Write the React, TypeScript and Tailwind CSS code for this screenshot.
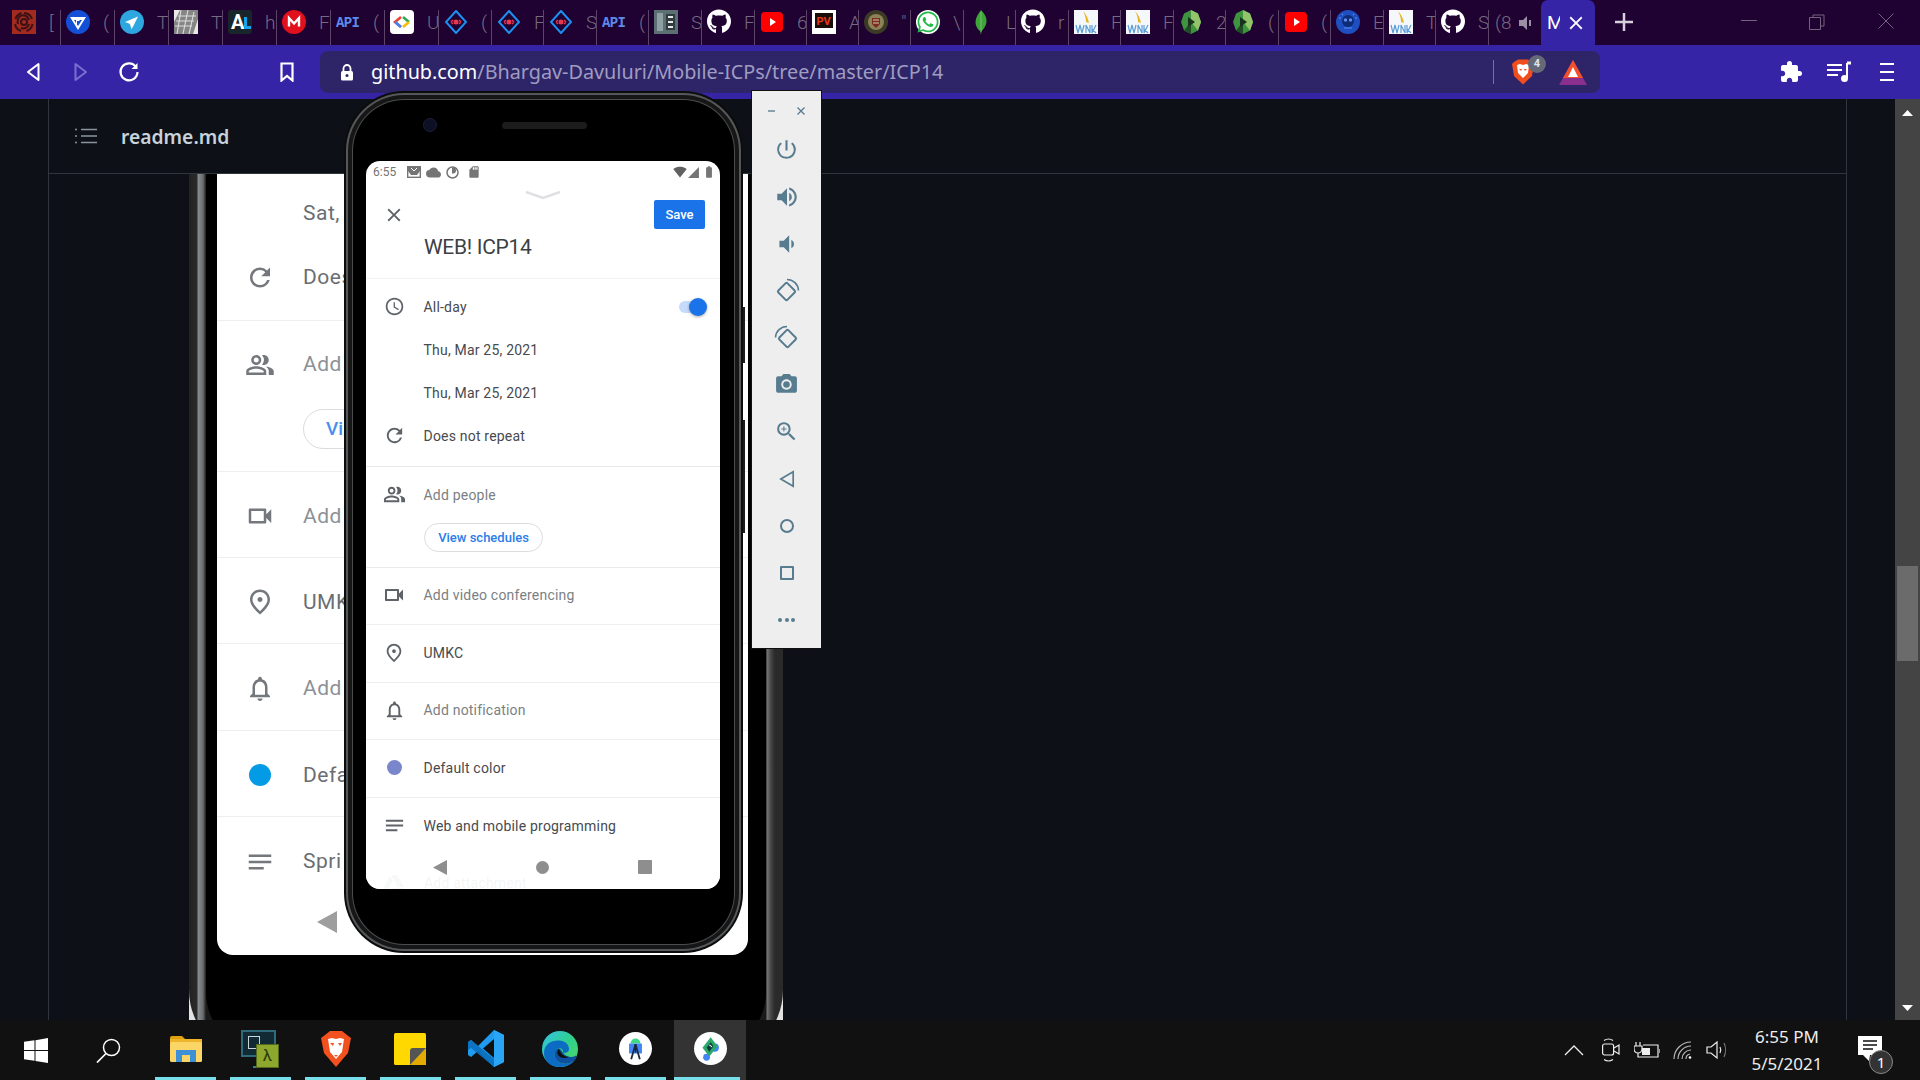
import React from "react";
import {
  MdPowerSettingsNew, MdVolumeUp, MdVolumeDown, MdPhotoCamera, MdZoomIn, MdClose, MdAccessTime, MdRefresh,
  MdOutlinePeopleAlt, MdOutlineVideocam, MdOutlinePlace, MdNotificationsNone, MdNotes, MdSignalWifi4Bar,
  MdSignalCellular4Bar, MdBatteryFull, MdCloud, MdSdCard, MdExtension,
} from "react-icons/md";
import { FaGithub, FaWhatsapp } from "react-icons/fa";

const Ic = ({ children, w = 24, h = 24, vb = "0 0 24 24", className = "" }: { children: React.ReactNode; w?: number; h?: number; vb?: string; className?: string }) => (
  <svg width={w} height={h} viewBox={vb} className={"shrink-0 " + className}>{children}</svg>
);

const Solo = () => (
  <Ic>
    <rect width="24" height="24" fill="#a32a1f" />
    <g fill="none" stroke="#3a1216" strokeWidth="2">
      <circle cx="12" cy="12" r="3" />
      <path d="M12 3a9 9 0 0 1 8 6M20.500 14a9 9 0 0 1-6 7M9 21a9 9 0 0 1-6-7M3.500 9a9 9 0 0 1 6-6" />
      <path d="M8 6c4-2 8 0 9 4M17 14c-1 4-5 5-8 4M6 14c-1-3 0-6 2-8" />
    </g>
  </Ic>
);
const Shield = () => (
  <Ic>
    <circle cx="12" cy="12" r="12" fill="#1450d6" />
    <path d="M4 7h16l-8 13zM8 10l4 6 4-6z" fill="#fff" fillRule="evenodd" />
    <path d="M10 9h5l-2 2h-2v4l-1-1z" fill="#fff" />
  </Ic>
);
const Telegram = () => (
  <Ic>
    <circle cx="12" cy="12" r="12" fill="#2ea6df" />
    <path d="M18 6.500 5 12l4 1.500 1 .8 1.500 5 2-3.500L18 6.500z" fill="#fff" />
  </Ic>
);
const Sheet = () => (
  <Ic>
    <rect width="24" height="24" fill="#e8e8e8" />
    <path d="M6 0h18v9l-5 15H0V12z" fill="#858585" />
    <path d="M4 6h18M2 11h18M1 16h17M7 0 3 24M14 0 9 24M20 2l-5 22" stroke="#ddd" strokeWidth="1.100" />
  </Ic>
);
const AL = () => (
  <Ic>
    <rect width="24" height="24" rx="3" fill="#18262c" />
    <text x="3" y="19" fontSize="20" fontWeight="700" fill="#fff" fontFamily="Roboto">A</text>
    <rect x="16" y="7" width="3" height="12" fill="#13a3f0" />
    <rect x="16" y="16" width="7" height="3" fill="#13a3f0" />
  </Ic>
);
const Mega = () => (
  <Ic>
    <circle cx="12" cy="12" r="12" fill="#e0101c" />
    <path d="M7 16.500V8l5 5.500L17 8v8.500" fill="none" stroke="#fff" strokeWidth="2.400" />
  </Ic>
);
const Api = () => (
  <Ic>
    <text x="0" y="17" fontSize="14" fontWeight="700" fill="#5b8be8" fontFamily="Liberation Mono" textLength="24">API</text>
  </Ic>
);
const GDev = () => (
  <Ic>
    <rect width="24" height="24" rx="4" fill="#fff" />
    <path d="M11 7 5 12l6 5" fill="none" stroke="#ea4335" strokeWidth="2.600" />
    <path d="M5 12l6 5" fill="none" stroke="#4285f4" strokeWidth="2.600" />
    <path d="M13 7l6 5" fill="none" stroke="#34a853" strokeWidth="2.600" />
    <path d="M19 12l-6 5" fill="none" stroke="#fbbc05" strokeWidth="2.600" />
  </Ic>
);
const Dia = () => (
  <Ic>
    <path d="M12 1 22 12 12 23 2 12z" fill="none" stroke="#1e90f0" strokeWidth="2" />
    <circle cx="12" cy="12" r="2.500" fill="#e8384f" />
    <path d="M7 12l2-2M7 12l2 2M17 12l-2-2M17 12l-2 2" stroke="#e8384f" strokeWidth="1.500" />
  </Ic>
);
const Server = () => (
  <Ic>
    <rect width="24" height="24" fill="#5c7074" />
    <rect x="3" y="3" width="6" height="18" fill="#8fa0a2" />
    <rect x="12" y="4" width="9" height="16" fill="#2f3d41" />
    <path d="M14 7h5M14 12h5M14 17h5" stroke="#e8e8e8" strokeWidth="2.200" />
  </Ic>
);
const Git = () => (
  <span className="w-[24px] h-[24px] flex items-center justify-center shrink-0">
    <FaGithub size={25} color="#fff" />
  </span>
);
const YT = () => (
  <Ic>
    <rect x="1" y="2" width="22" height="20" rx="4" fill="#f00" />
    <path d="M10 8l6 4-6 4z" fill="#fff" />
  </Ic>
);
const PV = () => (
  <Ic>
    <rect width="24" height="24" fill="#fff" />
    <rect x="3" y="3" width="18" height="15" fill="#1b0d0a" />
    <text x="4.500" y="15" fontSize="11" fontWeight="700" fill="#e8391a" fontFamily="Roboto">PV</text>
  </Ic>
);
const Crest = () => (
  <Ic>
    <circle cx="12" cy="12" r="12" fill="#3b3a25" />
    <circle cx="12" cy="12" r="8" fill="#8d8157" />
    <path d="M8 8h8v6l-4 4-4-4z" fill="#7a2b22" />
    <path d="M9 10h6M9 13h6" stroke="#d8cfa8" strokeWidth="1.200" />
  </Ic>
);
const WA = () => (
  <span className="w-[24px] h-[24px] rounded-full bg-white flex items-center justify-center shrink-0">
    <FaWhatsapp size={24} color="#25b94c" />
  </span>
);
const Leaf = () => (
  <Ic>
    <path d="M12 0c4 4 6 8 5.500 12S14 20 12.500 21l-.3 3h-.6l-.2-3C9 20 6.500 16 6.500 12S9 4 12 0z" fill="#3ea53a" />
    <path d="M12 2v20" stroke="#8ed287" strokeWidth=".7" />
  </Ic>
);
const UMKC = () => (
  <Ic>
    <rect width="24" height="30" fill="#f5f8fb" />
    <path d="M9 1c3 3 5 7 6 12l-3-1C12 8 11 5 9 1z" fill="#e6b422" />
    <path d="M2 15l2 8 2-8 2 8 2-8M12 23v-8l4 8v-8M18 15v8l4-8M18 19l4 4" fill="none" stroke="#5d9ed8" strokeWidth="1.200" />
  </Ic>
);
const Hex = () => (
  <Ic>
    <path d="M12 0 19 3.500 22 12l-3 8.500L12 24l-7-3.500L2 12l3-8.500z" fill="#3f9440" />
    <path d="M12 0 19 3.500 22 12l-3 8.500L12 12z" fill="#92c46a" />
    <path d="M12 12 5 20.500 12 24z" fill="#1f4d25" />
    <path d="M9 7l7 5-7 5z" fill="#17331c" />
  </Ic>
);
const Skull = () => (
  <Ic>
    <circle cx="12" cy="12" r="12" fill="#1d4fc0" />
    <circle cx="12" cy="11" r="6" fill="#0e2c76" />
    <circle cx="9.500" cy="10" r="1.700" fill="#5e8cf0" />
    <circle cx="14.500" cy="10" r="1.700" fill="#5e8cf0" />
    <path d="M8 18h8M3 8h2M19 8h2M6 4l1 1M18 4l-1 1" stroke="#5e8cf0" strokeWidth="1.200" />
  </Ic>
);

type Tab = { w: number; i: React.ReactNode; l: string; pl?: number };
const tabs: Tab[] = [
  { w: 61, i: <Solo />, l: "[", pl: 12 },
  { w: 54, i: <Shield />, l: "(" },
  { w: 54, i: <Telegram />, l: "T" },
  { w: 54, i: <Sheet />, l: "T" },
  { w: 54, i: <AL />, l: "h" },
  { w: 54, i: <Mega />, l: "F" },
  { w: 54, i: <Api />, l: "(" },
  { w: 54, i: <GDev />, l: "U" },
  { w: 53, i: <Dia />, l: "(" },
  { w: 52, i: <Dia />, l: "F" },
  { w: 53, i: <Dia />, l: "S" },
  { w: 52, i: <Api />, l: "(" },
  { w: 53, i: <Server />, l: "S" },
  { w: 53, i: <Git />, l: "F" },
  { w: 52, i: <YT />, l: "6" },
  { w: 52, i: <PV />, l: "A" },
  { w: 52, i: <Crest />, l: '"' },
  { w: 53, i: <WA />, l: "\\" },
  { w: 52, i: <Leaf />, l: "L" },
  { w: 53, i: <Git />, l: "r" },
  { w: 52, i: <UMKC />, l: "F" },
  { w: 53, i: <UMKC />, l: "F" },
  { w: 52, i: <Hex />, l: "2" },
  { w: 53, i: <Hex />, l: "(" },
  { w: 52, i: <YT />, l: "(" },
  { w: 53, i: <Skull />, l: "E" },
  { w: 52, i: <UMKC />, l: "T" },
  { w: 53, i: <Git />, l: "S" },
];

function TabStrip() {
  return (
    <div className="h-[45px] bg-[#1f0132] flex shrink-0 font-[Roboto,sans-serif]">
      {tabs.map((t, k) => (
        <div key={k} className="h-full flex shrink-0" style={{ width: t.w }}>
          <div className="flex-1 flex items-center min-w-0 overflow-hidden" style={{ paddingLeft: t.pl ?? 5 }}>
            <div className="-mt-[2px] shrink-0">{t.i}</div>
            <span className="ml-[13px] text-[19px] font-light text-[#766a80] leading-none">{t.l}</span>
          </div>
          <div className="self-end h-[35px] w-[1px] bg-[#5b4668]" />
        </div>
      ))}
      <div className="w-[52px] h-full flex items-center shrink-0 pl-[6px]">
        <span className="text-[19px] font-light text-[#766a80] leading-none">(8</span>
        <svg width="16" height="16" viewBox="0 0 16 16" className="ml-[6px]">
          <path d="M1 5h4l4-4v14l-4-4H1z" fill="#9a8fa3" />
          <path d="M11 5v6h2V5z" fill="#9a8fa3" />
        </svg>
      </div>
      <div className="w-[54px] h-full bg-[#3624a6] rounded-t-[7px] flex items-center shrink-0 pl-[6px]">
        <span className="text-[19px] text-white leading-none w-[13px] overflow-hidden">M</span>
        <MdClose size={22} color="#fff" className="ml-[5px]" />
      </div>
      <svg width="18" height="18" viewBox="0 0 18 18" className="ml-[20px] mt-[13px] shrink-0">
        <path d="M9 0v18M0 9h18" stroke="#d7d0dc" strokeWidth="2.500" />
      </svg>
      <div className="ml-[108px] mt-[20px] w-[16px] h-[1px] bg-[#74637f] shrink-0" />
      <svg width="16" height="16" viewBox="0 0 16 16" className="ml-[52px] mt-[14px] shrink-0">
        <path d="M4 3V1h11v11h-3M.500 3.500h11v12H.500z" fill="none" stroke="#74637f" />
      </svg>
      <svg width="16" height="16" viewBox="0 0 16 16" className="ml-[53px] mt-[13px] shrink-0">
        <path d="M.500.500l15 15M15.500.500l-15 15" stroke="#74637f" />
      </svg>
    </div>
  );
}

function AddressBar() {
  return (
    <div className="h-[54px] bg-[#3624a6] flex items-center shrink-0">
      <svg width="14" height="20" viewBox="0 0 14 20" className="ml-[26px] shrink-0">
        <path d="M12.500 2v16L2 10z" fill="none" stroke="#fff" strokeWidth="2" strokeLinejoin="round" />
      </svg>
      <svg width="14" height="20" viewBox="0 0 14 20" className="ml-[34px] shrink-0">
        <path d="M1.500 2v16L12 10z" fill="none" stroke="#7a6ed0" strokeWidth="2" strokeLinejoin="round" />
      </svg>
      <svg width="22" height="22" viewBox="0 0 22 22" className="ml-[30px] shrink-0">
        <path d="M18 6A8.500 8.500 0 1 0 19.500 11" fill="none" stroke="#fff" strokeWidth="2.200" />
        <path d="M19.500 2v6h-6z" fill="#fff" />
      </svg>
      <svg width="14" height="20" viewBox="0 0 14 20" className="ml-[140px] shrink-0">
        <path d="M1.500 1.500h11v17L7 14l-5.500 4.500z" fill="none" stroke="#fff" strokeWidth="2.200" />
      </svg>
      <div className="ml-[26px] w-[1280px] h-[42px] rounded-[8px] bg-[#2d2568] flex items-center shrink-0">
        <svg width="14" height="17" viewBox="0 0 14 17" className="ml-[20px] shrink-0">
          <path d="M3.500 7V4.500a3.500 3.500 0 0 1 7 0V7" fill="none" stroke="#fff" strokeWidth="1.800" />
          <rect x="1" y="7" width="12" height="9.500" rx="1.500" fill="#fff" />
          <circle cx="7" cy="11.500" r="1.500" fill="#2d2568" />
        </svg>
        <div className="ml-[17px] text-[19.800px] leading-none font-[Noto_Sans,sans-serif] whitespace-nowrap w-[1123px] shrink-0">
          <span className="text-white">github.com</span>
          <span className="text-[#a09cc0]">/Bhargav-Davuluri/Mobile-ICPs/tree/master/ICP14</span>
        </div>
        <div className="w-[1px] h-[24px] bg-[#77719f] shrink-0 -ml-[1px]" />
        <div className="relative ml-[17px] w-[24px] h-[26px] shrink-0">
          <svg width="24" height="26" viewBox="0 0 24 26">
            <path d="M3 3l4-2.500h10L21 3l2 2-2 12-9 8.500L3 17 1 5z" fill="#f04e1e" />
            <path d="M6 6l3-1 3 1 3-1 3 1-1 8-5 5-5-5z" fill="#fff" />
            <path d="M8 10h3l-1 2zM13 10h3l-2 2z" fill="#f04e1e" />
          </svg>
          <span className="absolute left-[17px] -top-[4px] w-[18px] h-[18px] rounded-full bg-[#666a78] text-[11px] font-bold text-[#dfe6f0] flex items-center justify-center font-[Roboto,sans-serif]">4</span>
        </div>
        <svg width="28" height="25" viewBox="0 0 28 25" className="ml-[24px] shrink-0">
          <path d="M14 0 28 25H0z" fill="#8a2f8e" />
          <path d="M14 0 24 18H4z" fill="#f2502a" />
          <path d="M14 7l5 10H9z" fill="#fff" />
        </svg>
      </div>
      <MdExtension size={24} color="#fff" className="ml-[179px] shrink-0" />
      <svg width="24" height="24" viewBox="0 0 24 24" className="ml-[24px] shrink-0">
        <path d="M0 5h15M0 10h15M0 15h11" stroke="#fff" strokeWidth="2" />
        <path d="M20 3v15" stroke="#fff" strokeWidth="2" />
        <path d="M20 3h4" stroke="#fff" strokeWidth="3" />
        <circle cx="17.500" cy="18.500" r="3.500" fill="#fff" />
      </svg>
      <svg width="14" height="20" viewBox="0 0 14 20" className="ml-[29px] shrink-0">
        <path d="M0 2h14M0 10h14M0 18h14" stroke="#fff" strokeWidth="2" />
      </svg>
    </div>
  );
}

const BgRow = ({ icon, text, h, border = true, muted = false, nudge = true }: { icon: React.ReactNode; text: string; h: number; border?: boolean; muted?: boolean; nudge?: boolean }) => (
  <div className={"flex items-center pl-[28px] box-border " + (border ? "border-b border-[#eeeeee] " : "") + (nudge ? "pt-[3px]" : "")} style={{ height: h }}>
    <div className="w-[30px] flex justify-center">{icon}</div>
    <span className={"ml-[28px] text-[21px] tracking-[0.5px] leading-none " + (muted ? "text-[#8d9196]" : "text-[#6a6e72]")}>{text}</span>
  </div>
);

function BgPhone() {
  const c = "#74777b";
  return (
    <div className="ml-[140px] w-[594px] h-[886px] bg-[#e2e2e2] shrink-0">
      <div className="w-full h-full rounded-b-[70px] bg-[linear-gradient(90deg,#222_0px,#2a2a2a_8px,#8a8d8f_9px,#6a6d6f_14px,#1a1a1a_17px,#1a1a1a_577px,#777_578px,#444_582px,#2a2a2a_586px,#2a2a2a_594px)] px-[17px] pb-[6px]">
        <div className="w-full h-full bg-black rounded-b-[62px] pl-[11px]">
          <div className="w-[531px] h-[781px] bg-white rounded-b-[16px] font-[Roboto,sans-serif] flex flex-col overflow-hidden">
            <BgRow icon={null} text="Sat," h={78} border={false} nudge={false} />
            <div className="h-[69px] border-b border-[#eeeeee] box-border">
              <BgRow icon={<MdRefresh size={31} color={c} />} text="Does" h={48} border={false} />
            </div>
            <div className="h-[151px] border-b border-[#eeeeee] box-border">
              <BgRow icon={<MdOutlinePeopleAlt size={34} color={c} />} text="Add" h={84} border={false} muted />
              <div className="ml-[86px] mt-[4px] w-[120px] h-[40px] rounded-full border border-[#dadce0] pl-[22px] flex items-center text-[19px] font-medium text-[#4a8fec]">Vi</div>
            </div>
            <BgRow icon={<MdOutlineVideocam size={38} color={c} />} text="Add" h={86} muted />
            <BgRow icon={<MdOutlinePlace size={30} color={c} />} text="UMK" h={86} />
            <BgRow icon={<MdNotificationsNone size={31} color={c} />} text="Add" h={87} muted />
            <BgRow icon={<span className="w-[22px] h-[22px] rounded-full bg-[#039be5] block" />} text="Defa" h={86} />
            <BgRow icon={<MdNotes size={32} color={c} />} text="Spri" h={86} border={false} />
            <div className="pl-[100px] pt-[8px]">
              <svg width="20" height="22" viewBox="0 0 20 22"><path d="M20 0v22L0 11z" fill="#9e9e9e" /></svg>
            </div>
          </div>
        </div>
      </div>
    </div>
  );
}

const Row = ({ icon, text, muted, border = true, h = 57 }: { icon?: React.ReactNode; text: string; muted?: boolean; border?: boolean; h?: number }) => (
  <div className={"flex items-center pl-[16px] pb-[2px] box-border shrink-0 " + (border ? "border-b border-[#eceef0]" : "")} style={{ height: h }}>
    <div className="w-[24px] h-[24px] flex items-center justify-center shrink-0">{icon}</div>
    <span className={"ml-[17.500px] text-[14px] tracking-[0.2px] leading-none " + (muted ? "text-[#7a7f84]" : "text-[#474a4e]")}>{text}</span>
  </div>
);

function Screen() {
  const c = "#5f6368";
  return (
    <div className="w-[354px] h-[728px] bg-white rounded-[14px] overflow-hidden relative font-[Roboto,sans-serif]">
      <div className="h-[22px] flex items-center pl-[7px] pr-[7px] text-[#757575] text-[12px]">
        <span className="w-[34px] shrink-0">6:55</span>
        <svg width="14" height="12" viewBox="0 0 14 12" className="shrink-0">
          <rect x=".700" y=".700" width="12.600" height="10.600" fill="none" stroke="#757575" strokeWidth="1.400" />
          <path d="M1 1h12v4L10 9H4L1 5z" fill="#757575" />
          <path d="M4 2l3 3 3-3" fill="none" stroke="#fff" strokeWidth="1" />
        </svg>
        <MdCloud size={15} color="#757575" className="ml-[5px] shrink-0" />
        <svg width="13" height="13" viewBox="0 0 13 13" className="ml-[5px] shrink-0">
          <circle cx="6.500" cy="6.500" r="5.500" fill="none" stroke="#757575" strokeWidth="1.500" />
          <path d="M6 1.500h1a3 3 0 0 1 0 6H6z" fill="#757575" />
        </svg>
        <MdSdCard size={14} color="#757575" className="ml-[8px] shrink-0" />
        <span className="flex-1" />
        <MdSignalWifi4Bar size={14} color="#616161" />
        <MdSignalCellular4Bar size={13} color="#757575" />
        <MdBatteryFull size={14} color="#757575" className="ml-[2px] -mr-[3px]" />
      </div>
      <div className="h-[17px] flex justify-center pt-[7px]">
        <svg width="36" height="10" viewBox="0 0 36 10"><path d="M1 2l17 6 17-6" fill="none" stroke="#e0e0e4" strokeWidth="2.500" /></svg>
      </div>
      <div className="h-[29px] flex items-center justify-between pl-[17px] pr-[15px]">
        <MdClose size={22} color={c} />
        <button className="w-[51px] h-[29px] rounded-[2px] bg-[#1a73e8] text-white text-[13px] font-medium pt-[1px]">Save</button>
      </div>
      <div className="h-[50px] pl-[58px] border-b border-[#f1f3f4] box-border">
        <div className="text-[21px] leading-[36px] text-[#3c4043] tracking-[-0.3px]">WEB! ICP14</div>
      </div>
      <div className="pt-[7px] pb-[8px] border-b border-[#e8eaed]">
        <div className="relative">
          <Row icon={<MdAccessTime size={21} color={c} />} text="All-day" border={false} h={43} />
          <div className="absolute left-[313px] top-[15px] w-[26px] h-[12px] rounded-full bg-[#c6dafc]" />
          <div className="absolute left-[323px] top-[12px] w-[18px] h-[18px] rounded-full bg-[#1a73e8] shadow-[0_1px_3px_rgba(0,0,0,0.35)]" />
        </div>
        <Row text="Thu, Mar 25, 2021" border={false} h={43} />
        <Row text="Thu, Mar 25, 2021" border={false} h={43} />
        <Row icon={<MdRefresh size={23} color={c} />} text="Does not repeat" border={false} h={43} />
      </div>
      <div className="pt-[7px] pb-[15px] border-b border-[#e8eaed]">
        <Row icon={<MdOutlinePeopleAlt size={23} color={c} />} text="Add people" muted border={false} h={43} />
        <div className="ml-[58px] mt-[6px] w-[119px] h-[29px] rounded-full border border-[#dadce0] flex items-center justify-center text-[13px] font-medium text-[#2a7de9]">View schedules</div>
      </div>
      <Row icon={<MdOutlineVideocam size={26} color={c} />} text="Add video conferencing" muted h={57} />
      <Row icon={<MdOutlinePlace size={22} color={c} />} text="UMKC" h={58} />
      <Row icon={<MdNotificationsNone size={23} color={c} />} text="Add notification" muted h={57} />
      <Row icon={<span className="w-[15px] h-[15px] rounded-full bg-[#7986cb] block" />} text="Default color" h={58} />
      <Row icon={<MdNotes size={23} color={c} />} text="Web and mobile programming" border={false} h={57} />
      <div className="flex items-center pl-[18px] h-[57px]">
        <svg width="20" height="18" viewBox="0 0 20 18"><path d="M7 0h6l7 12h-6zM6 1 0 12l3 5 6-11zM5 17h12l3-4H8z" fill="#9aa0a6" /></svg>
        <span className="ml-[20px] text-[14px] tracking-[0.2px] text-[#70757a]">Add attachment</span>
      </div>
      <div className="absolute left-0 right-0 bottom-0 h-[44px] bg-white/92 flex items-center pl-[67px]">
        <svg width="14" height="15" viewBox="0 0 14 15"><path d="M14 0v15L0 7.500z" fill="#8e8e8e" /></svg>
        <span className="ml-[89px] w-[13px] h-[13px] rounded-full bg-[#8e8e8e]" />
        <span className="ml-[89px] w-[14px] h-[14px] rounded-[1px] bg-[#8e8e8e]" />
      </div>
    </div>
  );
}

function Phone() {
  return (
    <div className="absolute left-[344px] top-[91px] w-[399px] h-[862px]">
      <div className="absolute right-[-2px] top-[216px] w-[4px] h-[56px] bg-[#1c1c1c]" />
      <div className="absolute right-[-2px] top-[329px] w-[4px] h-[113px] bg-[#1c1c1c]" />
      <div className="relative w-full h-full rounded-[60px] bg-[#0c0c0c] p-[2px]">
        <div className="w-full h-full rounded-[58px] bg-[#55585a] p-[2px]">
          <div className="w-full h-full rounded-[56px] bg-[#161616] p-[4px]">
            <div className="w-full h-full rounded-[52px] bg-[#4a4c4e] p-[1px]">
              <div className="w-full h-full rounded-[51px] bg-black pl-[13px] pt-[61px]">
                <div className="flex items-center h-[8px] -mt-[40px] mb-[32px]">
                  <span className="ml-[57px] w-[14px] h-[14px] rounded-full bg-[#0d0f24] border border-[#1c1f3a] shrink-0" />
                  <span className="ml-[65px] w-[85px] h-[7px] rounded-full bg-[#1c1c1c] shrink-0" />
                </div>
                <Screen />
              </div>
            </div>
          </div>
        </div>
      </div>
    </div>
  );
}

function Rot({ flip }: { flip?: boolean }) {
  return (
    <svg width="26" height="26" viewBox="0 0 26 26" style={flip ? { transform: "scaleX(-1)" } : undefined}>
      <g fill="none" stroke="#587c8f" strokeWidth="2">
        <rect x="6" y="7" width="13" height="13" rx="1.500" transform="rotate(45 12.500 13.500)" />
        <path d="M13 1.500a11.500 11.500 0 0 1 11.500 11" strokeWidth="1.600" />
      </g>
    </svg>
  );
}

function Tools() {
  const c = "#587c8f";
  const items: React.ReactNode[] = [
    <MdPowerSettingsNew size={25} color={c} />,
    <MdVolumeUp size={26} color={c} />,
    <MdVolumeDown size={26} color={c} />,
    <Rot />,
    <Rot flip />,
    <MdPhotoCamera size={25} color={c} />,
    <MdZoomIn size={25} color={c} />,
    <svg width="16" height="18" viewBox="0 0 14 16"><path d="M12.500 1.500v13L1.500 8z" fill="none" stroke={c} strokeWidth="1.500" /></svg>,
    <span className="w-[14px] h-[14px] rounded-full border-2 border-[#587c8f]" />,
    <span className="w-[14px] h-[14px] rounded-[1px] border-2 border-[#587c8f]" />,
    <span className="flex gap-[2.500px]"><i className="w-[4px] h-[4px] rounded-full bg-[#587c8f]" /><i className="w-[4px] h-[4px] rounded-full bg-[#587c8f]" /><i className="w-[4px] h-[4px] rounded-full bg-[#587c8f]" /></span>,
  ];
  return (
    <div className="absolute left-[752px] top-[91px] w-[69px] h-[557px] bg-[#eeeeee] shadow-[0_0_0_1px_#111] flex flex-col">
      <div className="h-[35px] flex items-center pl-[16px] pt-[5px] shrink-0">
        <span className="w-[7px] h-[1.500px] bg-[#8aa0ad]" />
        <svg width="10" height="10" viewBox="0 0 10 10" className="ml-[21px]"><path d="M1.500 1.500l7 7M8.500 1.500l-7 7" stroke="#587c8f" strokeWidth="1.300" /></svg>
      </div>
      {items.map((it, k) => (
        <div key={k} className="h-[47px] flex items-center justify-center shrink-0">{it}</div>
      ))}
    </div>
  );
}

function Main() {
  return (
    <div className="flex-1 flex min-h-0 bg-[#0d1117]">
      <div className="w-[48px] shrink-0" />
      <div className="w-[1799px] shrink-0 border-x border-[#30363d] flex flex-col overflow-hidden box-border">
        <div className="h-[75px] shrink-0 border-b border-[#30363d] flex items-center box-border">
          <svg width="22" height="16" viewBox="0 0 22 16" className="ml-[26px]">
            <path d="M6 1.500h16M6 8h16M6 14.500h16" stroke="#8b949e" strokeWidth="1.700" />
            <circle cx="1" cy="1.500" r="1" fill="#8b949e" />
            <circle cx="1" cy="8" r="1" fill="#8b949e" />
            <circle cx="1" cy="14.500" r="1" fill="#8b949e" />
          </svg>
          <span className="ml-[24px] pt-[2px] text-[19.300px] font-semibold text-[#c9d1d9] font-[Noto_Sans,sans-serif] leading-none">readme.md</span>
        </div>
        <BgPhone />
      </div>
      <div className="w-[48px] shrink-0" />
      <div className="w-[25px] shrink-0 bg-[#444444] flex flex-col items-center">
        <svg width="11" height="6" viewBox="0 0 11 6" className="mt-[11px]"><path d="M5.500 0 11 6H0z" fill="#fff" /></svg>
        <div className="mt-[450px] w-[21px] h-[95px] bg-[#6b6b6b]" />
        <div className="flex-1" />
        <svg width="11" height="6" viewBox="0 0 11 6" className="mb-[9px]"><path d="M0 0h11L5.500 6z" fill="#fff" /></svg>
      </div>
    </div>
  );
}

const Folder = () => (
  <Ic w={32} h={26} vb="0 0 32 26">
    <path d="M0 2a2 2 0 0 1 2-2h10l3 3H0z" fill="#e0a10f" />
    <rect y="3" width="32" height="5" fill="#eeb52b" />
    <rect y="6" width="32" height="20" rx="1.500" fill="#fbd565" />
    <path d="M6 14h20v12h-6v-7h-8v7H6z" fill="#3d8fd6" />
  </Ic>
);
const Racket = () => (
  <span className="relative w-[38px] h-[38px] block -ml-[1px]">
    <span className="absolute left-0 top-0 w-[35px] h-[27px] border-2 border-[#2e6a7a] bg-[#122a33]" />
    <span className="absolute left-[7px] top-[6px] w-[12px] h-[13px] border border-[#c8d4d8]" />
    <span className="absolute left-[12px] bottom-0 w-[14px] h-[2px] bg-[#3d7d8f]" />
    <span className="absolute left-[15px] top-[14px] w-[23px] h-[24px] bg-[#8ea82e] border border-[#56691a] flex items-center justify-center text-[#2e3a0c] text-[17px] leading-none font-[Roboto,sans-serif]">λ</span>
  </span>
);
const BraveBig = () => (
  <Ic w={30} h={36} vb="0 0 30 36">
    <path d="M4 4 9 0h12l5 4 4 3-3 15-12 14L3 22 0 7z" fill="#f2501e" />
    <path d="M7 8l4-1 4 1 4-1 4 1-2 13-6 7-6-7z" fill="#fff" />
    <path d="M9 12h4l-1 3zM17 12h4l-2 3z" fill="#f2501e" />
    <path d="M13 24h4l-2 2z" fill="#f2501e" />
  </Ic>
);
const Sticky = () => (
  <Ic w={32} h={32} vb="0 0 32 32" className="-ml-[2px]">
    <rect width="32" height="32" rx="1.500" fill="#ffd800" />
    <path d="M32 15v17H16z" fill="#e3ab00" />
    <path d="M16 32 32 15H19a3 3 0 0 0-3 3z" fill="#555" />
  </Ic>
);
const VS = () => (
  <Ic w={36} h={37} vb="0 0 36 37">
    <path d="M26 0 36 5v27l-10 5L10 21l-7 6-3-2V12l3-2 7 6z" fill="#1f9cf0" />
    <path d="M26 9 15 18.500 26 28z" fill="#111" />
    <path d="M0 12l3-2 23 19v8L3 18 0 20z" fill="#0a6ebd" opacity=".9" />
    <path d="M26 0v37l10-5V5z" fill="#2aa5f5" />
  </Ic>
);
const Edge = () => (
  <Ic w={36} h={36} vb="0 0 36 36" className="-ml-[1px]">
    <defs>
      <linearGradient id="eg" x1="0" y1="0" x2="1" y2="1"><stop offset="0" stopColor="#35c1f1" /><stop offset=".5" stopColor="#2fd08a" /><stop offset="1" stopColor="#52d66a" /></linearGradient>
    </defs>
    <circle cx="18" cy="18" r="18" fill="url(#eg)" />
    <path d="M2 22C2 12 12 8 20 10c5 1 7 5 7 8 0 3-3 4-6 4 1-4-3-6-6-4-4 3-3 10 2 13 4 2 10 3 16-2-3 4-8 7-15 7C8 36 2 30 2 22z" fill="#0c6cc4" />
    <path d="M15 18c-4 3-3 10 2 13 4 2 10 3 16-2 2-2 2-5 0-4-3 2-9 1-12-3-1-2-3-6-6-4z" fill="#0f4f9f" />
    <path d="M17 18c-2 1-2 4-1 6 2 3 7 4 11 2-5 0-8-3-10-8z" fill="#101010" />
  </Ic>
);
const AS = () => (
  <span className="w-[33px] h-[33px] rounded-full bg-white flex items-center justify-center">
    <svg width="17" height="23" viewBox="0 0 22 32">
      <path d="M4 9a7 7 0 0 1 14 0z" fill="#3ddc84" />
      <rect x="2" y="9" width="18" height="14" rx="1" fill="#4285f4" />
      <path d="M11 10 5 31M11 10l6 21" stroke="#1a2a3a" strokeWidth="2.500" />
      <path d="M11 10v12" stroke="#1a2a3a" strokeWidth="2" />
    </svg>
  </span>
);
const Emu = () => (
  <span className="w-[33px] h-[33px] rounded-full bg-white flex items-center justify-center">
    <svg width="20" height="26" viewBox="0 0 28 38">
      <circle cx="21" cy="17" r="6" fill="#4285f4" />
      <circle cx="9" cy="31" r="5" fill="#4285f4" />
      <path d="M15 2 25 15 13 30 3 17z" fill="#2aa96a" />
      <path d="M15 9l4 6-6 8-4-6z" fill="#0d3d3a" />
      <path d="M13 13l4 3" stroke="#fff" strokeWidth="1.500" />
    </svg>
  </span>
);
const taskApps: React.ReactNode[] = [<Folder />, <Racket />, <BraveBig />, <Sticky />, <VS />, <Edge />, <AS />];

function Taskbar() {
  return (
    <div className="h-[60px] bg-[#111111] flex shrink-0 text-[#ededed] font-[Noto_Sans,sans-serif]">
      <div className="w-[72px] flex items-center justify-center shrink-0">
        <svg width="24" height="25" viewBox="0 0 24 25"><path d="M0 3.800 10.500 2.300V12H0zM11.500 2.200 24 0v12H11.500zM0 13h10.500v9.700L0 21.200zM11.500 13H24v12l-12.500-2.100z" fill="#fff" /></svg>
      </div>
      <div className="w-[76px] flex items-center justify-center shrink-0 pr-[4px]">
        <svg width="25" height="25" viewBox="0 0 25 25"><circle cx="15.500" cy="9.500" r="8" fill="none" stroke="#fff" strokeWidth="1.500" /><path d="M10 15.500 1 24.500" stroke="#fff" strokeWidth="1.700" /></svg>
      </div>
      {taskApps.map((a, k) => (
        <div key={k} className="w-[75px] flex flex-col shrink-0">
          <div className="flex-1 flex items-center justify-center">{a}</div>
          <div className="h-[3px] mx-[7px] bg-[#76dfe9]" />
        </div>
      ))}
      <div className="w-[72px] ml-[1px] flex flex-col shrink-0 bg-[#333333]">
        <div className="flex-1 flex items-center justify-center"><Emu /></div>
        <div className="h-[3px] mr-[6px] bg-[#76dfe9]" />
      </div>
      <div className="flex-1" />
      <div className="w-[36px] flex items-center justify-center shrink-0">
        <svg width="20" height="12" viewBox="0 0 20 12"><path d="M1 11l9-9 9 9" fill="none" stroke="#eee" strokeWidth="1.300" /></svg>
      </div>
      <div className="w-[37px] flex items-center justify-center shrink-0">
        <svg width="18" height="24" viewBox="0 0 18 24" fill="none" stroke="#eee" strokeWidth="1.200">
          <rect x=".600" y="6" width="11" height="11" rx="2" />
          <path d="M12 10l5-3v9l-5-3M2 2.500c3-2 6-2 9 0M2 21.500c3 2 6 2 9 0" />
        </svg>
      </div>
      <div className="w-[35px] flex items-center justify-center shrink-0">
        <svg width="26" height="18" viewBox="0 0 26 18" fill="none" stroke="#eee" strokeWidth="1.200">
          <path d="M2 1v4M6 1v4M0 5h8v3a4 4 0 0 1-8 0zM4 12v4h20V4H9" />
          <rect x="8" y="7" width="8" height="7" fill="#eee" stroke="none" />
          <path d="M26 8v4" />
        </svg>
      </div>
      <div className="w-[38px] flex items-center justify-center shrink-0">
        <svg width="20" height="18" viewBox="0 0 20 18" fill="none" stroke="#bbb" strokeWidth="1.200">
          <path d="M1 18A17 17 0 0 1 18 1M5 18A13 13 0 0 1 18 5M9 18a9 9 0 0 1 9-9M13 18a5 5 0 0 1 4-5" />
          <circle cx="17" cy="16.500" r="1.300" fill="#fff" stroke="none" />
        </svg>
      </div>
      <div className="w-[31px] flex items-center justify-center shrink-0">
        <svg width="23" height="20" viewBox="0 0 23 20" fill="none" stroke="#eee" strokeWidth="1.200">
          <path d="M1 7h4l6-5v16l-6-5H1z" />
          <path d="M14 7c1 2 1 4 0 6" />
          <path d="M18 3c2 4 2 10 0 14" stroke="#777" />
        </svg>
      </div>
      <div className="w-[108px] flex flex-col items-center shrink-0 text-[17px] leading-[27px] pt-[3px]">
        <span>6:55 PM</span>
        <span>5/5/2021</span>
      </div>
      <div className="w-[58px] relative flex items-center justify-center shrink-0">
        <svg width="24" height="25" viewBox="0 0 24 25" className="-mt-[4px] -ml-[1px]">
          <path d="M0 0h24v19H12l-1 6-6-6H0z" fill="#fff" />
          <path d="M5 5h14M5 9h14M5 13h10" stroke="#111" strokeWidth="1.300" />
        </svg>
        <span className="absolute left-[28px] top-[30px] w-[24px] h-[24px] rounded-full bg-[#333] border border-[#888] text-[15px] text-white flex items-center justify-center leading-none">1</span>
      </div>
      <div className="w-[21px] shrink-0" />
    </div>
  );
}

export default function App() {
  return (
    <div className="w-[1920px] h-[1080px] flex flex-col overflow-hidden relative">
      <TabStrip />
      <AddressBar />
      <Main />
      <Taskbar />
      <Phone />
      <Tools />
    </div>
  );
}
